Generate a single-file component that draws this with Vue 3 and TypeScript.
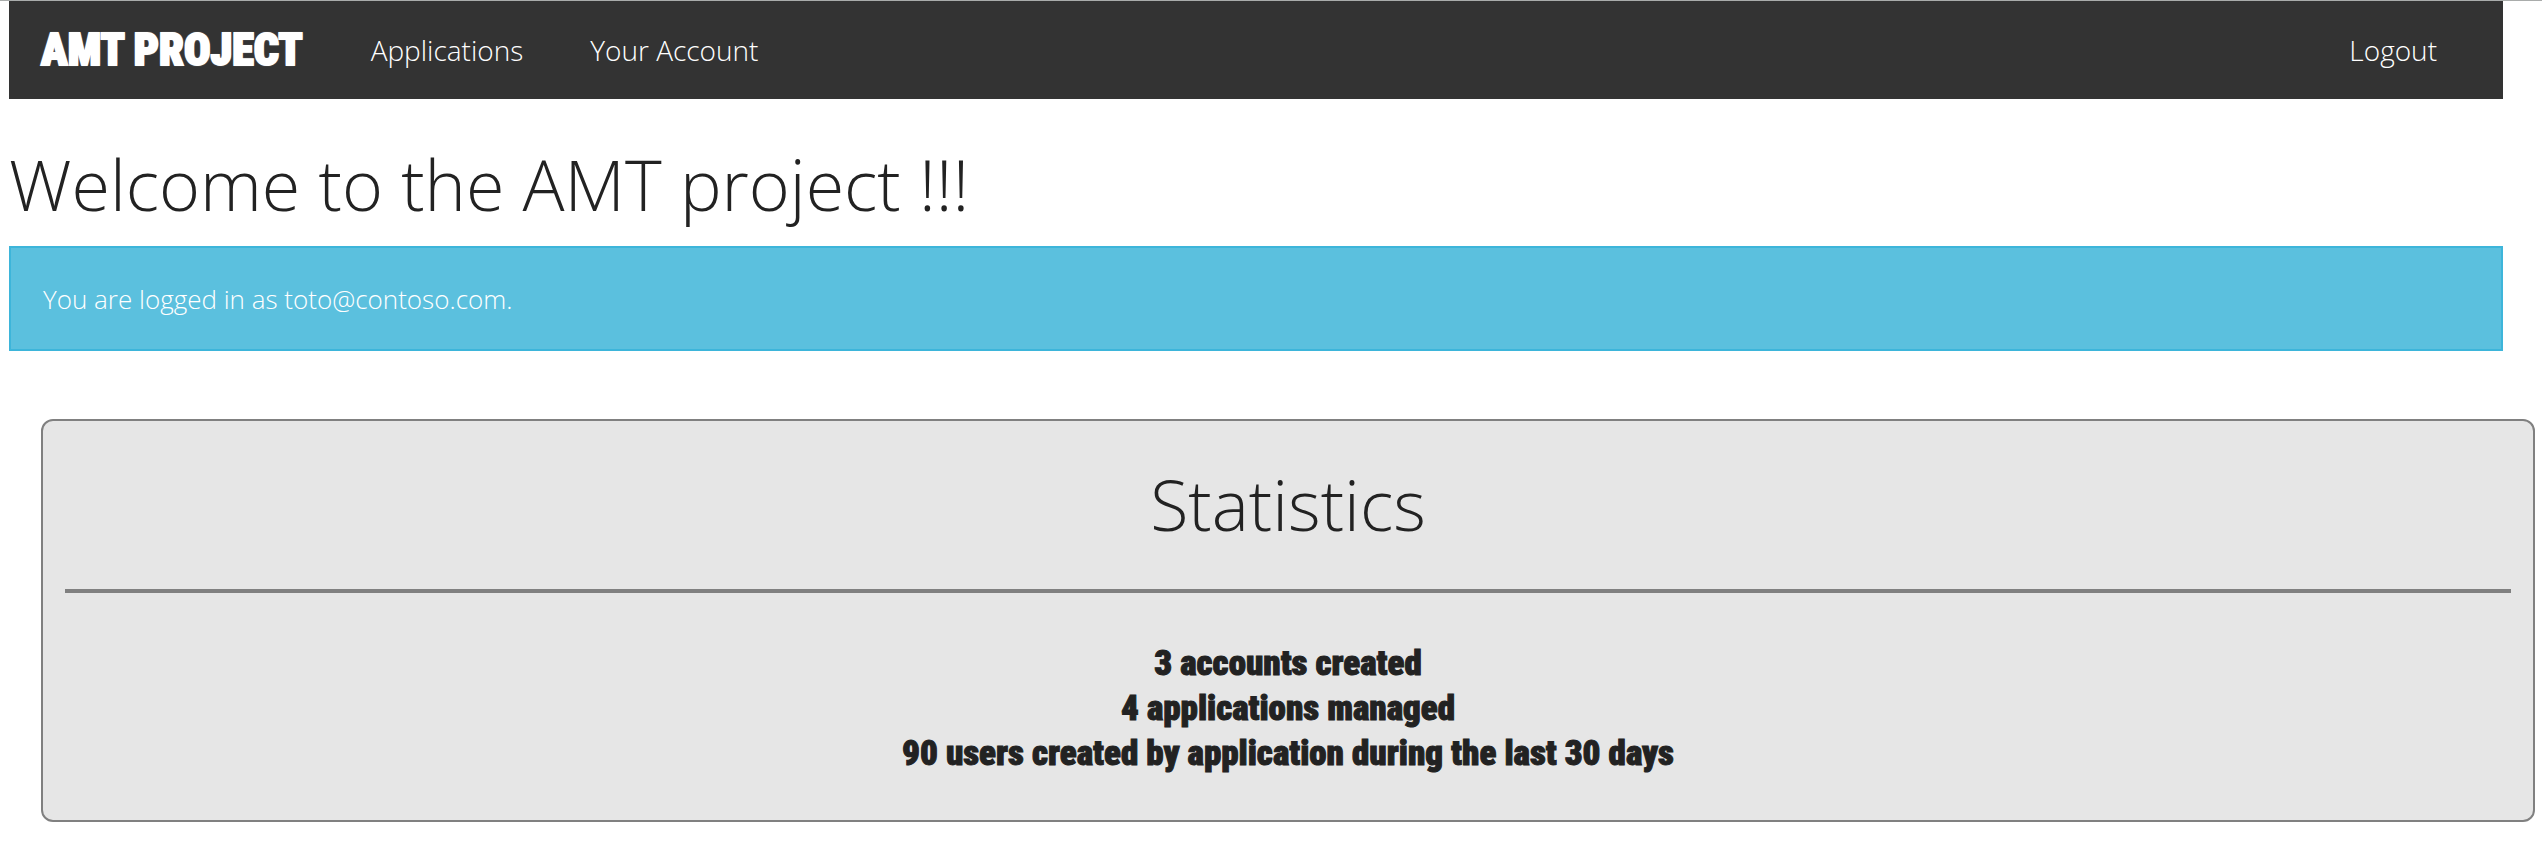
<script setup lang="ts">
interface NavLink {
  label: string
  href: string
}

const links: NavLink[] = [
  { label: 'Applications', href: '#applications' },
  { label: 'Your Account', href: '#account' },
]

const email = 'toto@contoso.com'

const statistics: string[] = [
  '3 accounts created',
  '4 applications managed',
  '90 users created by application during the last 30 days',
]
</script>

<template>
  <div class="page">
    <header class="top-bar">
      <a class="brand" href="#home">AMT PROJECT</a>
      <nav class="nav">
        <a v-for="link in links" :key="link.href" class="nav-link" :href="link.href">{{ link.label }}</a>
        <a class="nav-link logout" href="#logout">Logout</a>
      </nav>
    </header>
    <main>
      <h1 class="title">Welcome to the AMT project !!!</h1>
      <p class="alert">You are logged in as {{ email }}.</p>
      <section class="panel" aria-labelledby="statistics-title">
        <h2 id="statistics-title" class="title">Statistics</h2>
        <hr class="rule" />
        <ul class="stats">
          <li v-for="line in statistics" :key="line">{{ line }}</li>
        </ul>
      </section>
    </main>
  </div>
</template>

<style>
body {
  margin: 0;
  background: #fff;
}
</style>

<style scoped>
.page {
  padding: 0 39px 32px 9px;
  border-top: 1px solid #a9acab;
  color: #222;
  font-family: "Open Sans", "Noto Sans", sans-serif;
  font-weight: 300;
}

.top-bar {
  display: flex;
  align-items: center;
  height: 98px;
  padding: 0 66px 0 32px;
  background: #333;
}

.brand {
  color: #fff;
  font-family: Impact, "Roboto Condensed", Roboto, sans-serif;
  font-size: 44px;
  font-weight: 900;
  line-height: 98px;
  text-decoration: none;
  text-shadow: 0 0 2px #fff;
  -webkit-text-stroke: 2px #fff;
  white-space: nowrap;
}

.nav {
  display: flex;
  flex: 1;
  gap: 67px;
  margin-left: 68px;
}

.nav-link {
  color: #fff;
  font-size: 28px;
  line-height: 98px;
  text-decoration: none;
}

.logout {
  margin-left: auto;
}

.title {
  margin: 0;
  font-size: 70px;
  font-weight: 300;
  line-height: 98px;
}

h1.title {
  padding: 36px 0 13px;
}

.alert {
  margin: 0;
  padding: 33px 32px 31px;
  border: 2px solid #3db5da;
  background: #5bc0de;
  color: #fff;
  font-size: 26px;
  line-height: 37px;
}

.panel {
  margin: 68px -32px 0 32px;
  padding: 34px 22px 44px;
  border: 2px solid #808080;
  border-radius: 12px;
  background: #e6e6e6;
  text-align: center;
}

.rule {
  height: 4px;
  margin: 36px 0 48px;
  border: 0;
  background: #808080;
}

.stats {
  margin: 0;
  padding: 0;
  font-family: Impact, "Roboto Condensed", Roboto, sans-serif;
  font-size: 35px;
  font-weight: 900;
  line-height: 45px;
  list-style: none;
  -webkit-text-stroke: 1px #222;
}
</style>
